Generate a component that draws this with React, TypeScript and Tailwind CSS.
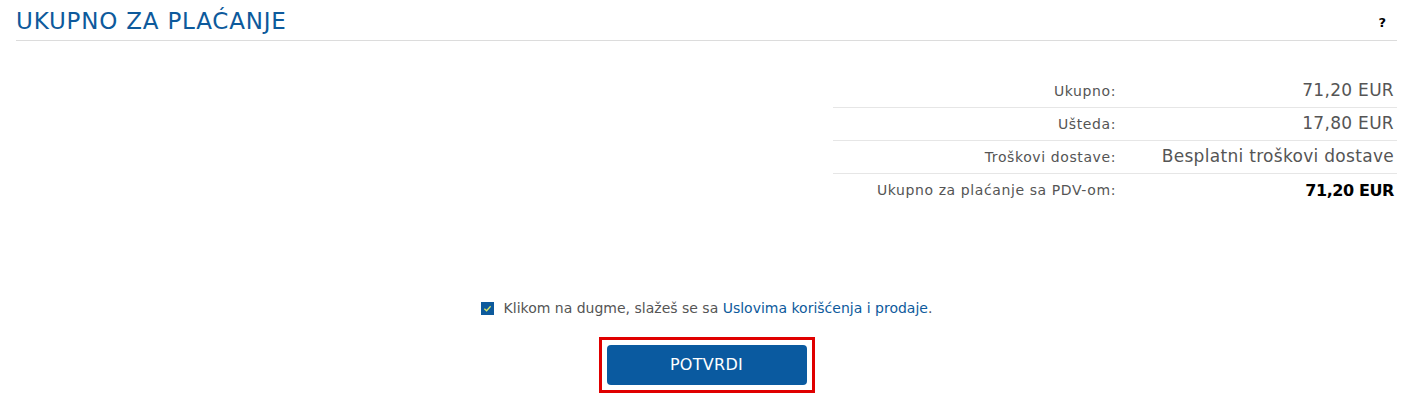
import React, { useState } from "react";

const rows = [
  { label: "Ukupno:", value: "71,20 EUR" },
  { label: "Ušteda:", value: "17,80 EUR" },
  { label: "Troškovi dostave:", value: "Besplatni troškovi dostave" },
];

export default function App() {
  const [agreed, setAgreed] = useState(true);

  return (
    <div className="min-h-[408px] bg-white pl-4 pr-[6px] font-['DejaVu_Sans',sans-serif] text-[#555]">
      {/* header */}
      <div className="flex items-end justify-between border-b border-[#dcdcdc] pt-[8px] pb-[6px]">
        <h2 className="text-[23px] leading-[26px] tracking-[0.8px] text-[#0d5a9c]">
          UKUPNO ZA PLAĆANJE
        </h2>
        <span className="mr-[11px] mb-[2px] text-[13px] font-bold text-black">?</span>
      </div>

      {/* totals */}
      <div className="mt-[34px] flex justify-end">
        <div className="w-[564px]">
          {rows.map((r) => (
            <div
              key={r.label}
              className="grid h-[33px] grid-cols-[283px_1fr] items-center border-b border-[#e6e6e6]"
            >
              <span className="text-right text-[14px] tracking-[0.6px] text-[#555]">{r.label}</span>
              <span className="pr-[3px] text-right text-[17px] tracking-[0.3px] text-[#555]">{r.value}</span>
            </div>
          ))}
          <div className="grid h-[33px] grid-cols-[283px_1fr] items-center">
            <span className="text-right text-[14px] tracking-[0.6px] text-[#555]">
              Ukupno za plaćanje sa PDV-om:
            </span>
            <span className="pr-[3px] text-right text-[16px] font-bold tracking-[-0.4px] text-black">
              71,20 EUR
            </span>
          </div>
        </div>
      </div>

      {/* agree + submit */}
      <div className="mt-[91px] flex flex-col items-center">
        <label className="flex items-center gap-[10px] text-[14px] text-[#555]">
          <button
            onClick={() => setAgreed(!agreed)}
            className={`flex h-[13px] w-[13px] items-center justify-center ${
              agreed ? "bg-[#0d5a9c]" : "border border-gray-400 bg-white"
            }`}
          >
            {agreed && (
              <svg width="9" height="9" viewBox="0 0 10 10" fill="none">
                <path d="M1.5 5.2 4 7.5 8.5 2.5" stroke="#d9e86a" strokeWidth="1.4" />
              </svg>
            )}
          </button>
          <span>
            Klikom na dugme, slažeš se sa{" "}
            <a className="text-[#0d5a9c]">Uslovima korišćenja i prodaje</a>.
          </span>
        </label>

        <div className="mt-[18px] border-[3px] border-[#e00000] p-[5px]">
          <button className="h-[40px] w-[200px] rounded-[4px] bg-[#0a5aa0] text-[16px] tracking-[0.3px] text-white">
            POTVRDI
          </button>
        </div>
      </div>
    </div>
  );
}
